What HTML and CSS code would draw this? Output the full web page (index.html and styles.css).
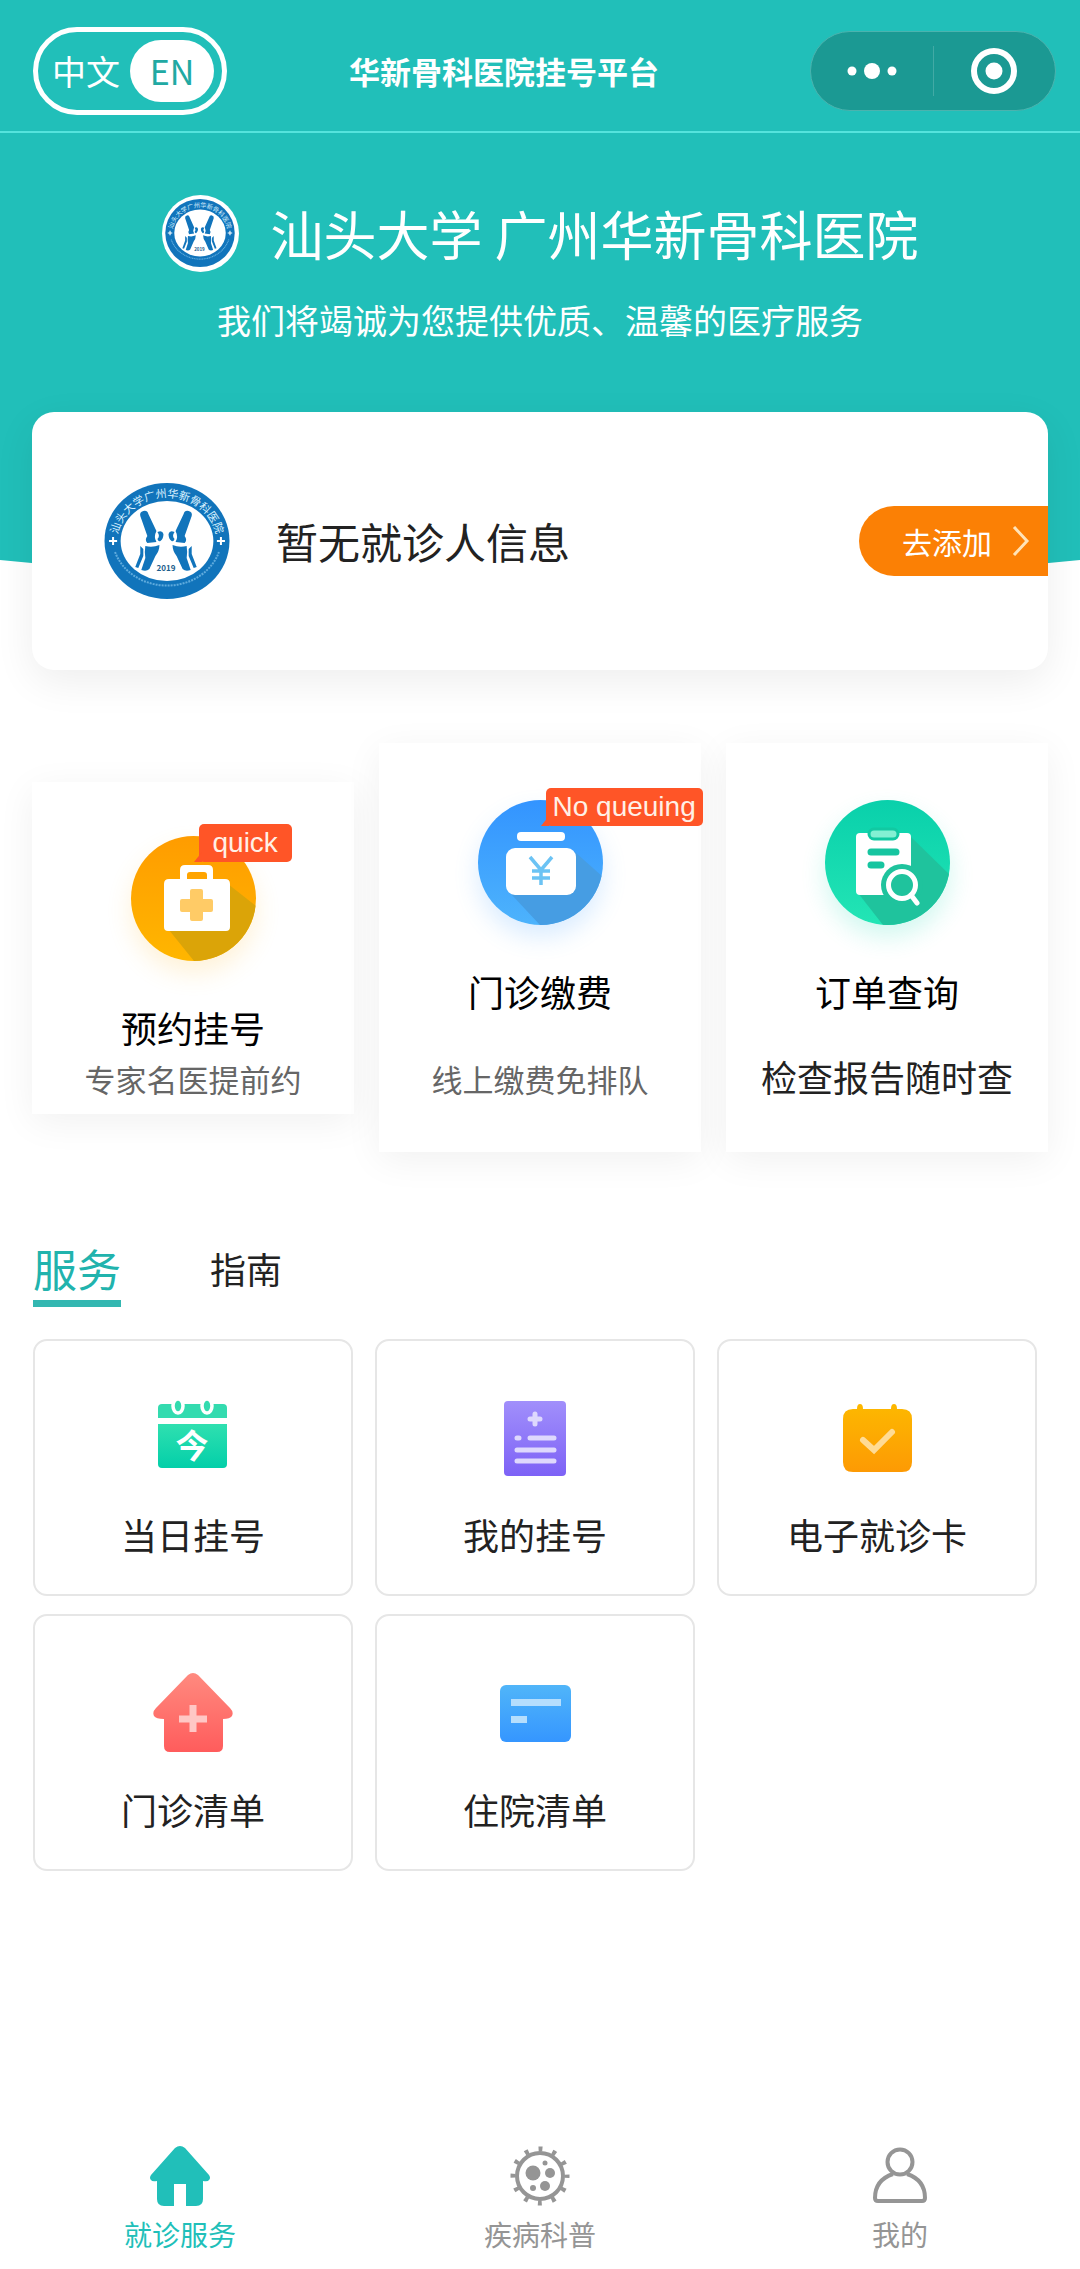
FILE: index.html
```html
<!DOCTYPE html>
<html lang="zh-CN">
<head>
  <meta charset="UTF-8" />
  <meta name="viewport" content="width=device-width, initial-scale=1" />
  <title>华新骨科医院挂号平台</title>
  <link rel="stylesheet" href="styles.css">
</head>
<body>
  <!-- shared hospital emblem -->
  <svg class="defs" width="0" height="0" aria-hidden="true">
    <defs>
      <path id="ring-top" d="M13 60 A49 45 0 0 1 112 60" />
      <g id="bone">
        <path d="M36 33q-1-4 3-5 4-1 5 3l8 17q-3 6 0 11l-9 1q-3-3 0-7z" />
        <path d="M53 49q5-2 6 2 0 5-3 7-2 1-3-2 3-3 0-7z" />
        <path d="M41 63q7 2 14-1 0 6-4 11l-6 13q-3 3-8 1l4-12q-1-6 0-12z" />
        <path d="M36 63l3 3v7l-5 12-3-1 5-13z" />
      </g>
      <symbol id="emblem" viewBox="0 0 125 116" preserveAspectRatio="none">
        <ellipse cx="62.5" cy="58" rx="62" ry="58" fill="#1174bb" />
        <ellipse cx="62.5" cy="58" rx="46" ry="40" fill="#fff" />
        <text font-size="11" fill="#d9f1ff"><textPath href="#ring-top" startOffset="50%" text-anchor="middle">汕头大学广州华新骨科医院</textPath></text>
        <path d="M11 69a54 48 0 0 0 103 0" fill="none" stroke="#5fabdd" stroke-width="2" stroke-dasharray="2 1" />
        <path d="M8 54h2v3h3v2h-3v3h-2v-3h-3v-2h3zM115 54h2v3h3v2h-3v3h-2v-3h-3v-2h3z" fill="#fff" />
        <use href="#bone" fill="#1174bb" />
        <use href="#bone" fill="#1174bb" transform="translate(123 0) scale(-1 1)" />
        <text x="61.5" y="88" font-size="8" font-weight="bold" fill="#1c5d8c" text-anchor="middle">2019</text>
      </symbol>
    </defs>
  </svg>

  <header class="topbar">
    <button class="lang"><span>中文</span><span class="lang-on">EN</span></button>
    <h1>华新骨科医院挂号平台</h1>
    <div class="capsule">
      <button aria-label="更多">
        <svg width="50" height="50" viewBox="0 0 50 50" fill="#fff"><circle cx="5" cy="25" r="4.5" /><circle cx="25" cy="25" r="8" /><circle cx="45" cy="25" r="4.5" /></svg>
      </button>
      <button aria-label="关闭">
        <svg width="50" height="50" viewBox="0 0 50 50"><circle cx="25" cy="25" r="20" fill="none" stroke="#fff" stroke-width="6" /><circle cx="25" cy="25" r="8.5" fill="#fff" /></svg>
      </button>
    </div>
  </header>

  <section class="hero">
    <div class="hero-name">
      <span class="hero-logo"><svg width="70" height="68"><use href="#emblem" /></svg></span>
      <h2>汕头大学 广州华新骨科医院</h2>
    </div>
    <p>我们将竭诚为您提供优质、温馨的医疗服务</p>
  </section>

  <main>
    <section class="patient">
      <svg width="126" height="116"><use href="#emblem" /></svg>
      <p>暂无就诊人信息</p>
      <button class="add-btn">去添加
        <svg width="18" height="32" viewBox="0 0 18 32" fill="none" stroke="#ffe3b8" stroke-width="3"><path d="M2 2l13 14L2 30" /></svg>
      </button>
    </section>

    <section class="features">
      <a class="feature" href="#">
        <span class="feature-icon orange">
          <svg width="125" height="125" viewBox="0 0 125 125">
            <defs>
              <linearGradient id="g-orange" x1="0" y1="0" x2="0" y2="1"><stop offset="0" stop-color="#ff9c00" /><stop offset="1" stop-color="#ffb600" /></linearGradient>
              <clipPath id="disc"><circle cx="62.5" cy="62.5" r="62.5" /></clipPath>
            </defs>
            <circle cx="62.5" cy="62.5" r="62.5" fill="url(#g-orange)" />
            <path clip-path="url(#disc)" d="M97 48l28 22v55H63L38 94z" fill="#dba408" />
            <path fill="#fff" fill-rule="evenodd" d="M49 43V34q0-5 5-5h23q5 0 5 5v9h12q5 0 5 5v43q0 4-4 4H37q-4 0-4-4V48q0-5 5-5zM56 43h20v-4q0-3-3-3H59q-3 0-3 3z" />
            <path fill="#ffcb66" d="M61 53h9q2 0 2 2v8h8q2 0 2 2v9q0 2-2 2h-8v7q0 2-2 2h-9q-2 0-2-2v-7h-8q-2 0-2-2v-9q0-2 2-2h8v-8q0-2 2-2z" />
          </svg>
          <span class="badge">quick</span>
        </span>
        <h3>预约挂号</h3>
        <p>专家名医提前约</p>
      </a>
      <a class="feature tall" href="#">
        <span class="feature-icon blue">
          <svg width="125" height="125" viewBox="0 0 125 125">
            <defs><linearGradient id="g-blue" x1="0" y1="0" x2="0" y2="1"><stop offset="0" stop-color="#3394ff" /><stop offset="1" stop-color="#4db3fc" /></linearGradient></defs>
            <circle cx="62.5" cy="62.5" r="62.5" fill="url(#g-blue)" />
            <path clip-path="url(#disc)" d="M97 52l28 25v48H62L33 94z" fill="#469de3" />
            <rect x="39" y="32" width="48" height="9" rx="4" fill="#fff" />
            <rect x="28" y="48" width="70" height="47" rx="9" fill="#fff" />
            <path d="M52 57l11 13 11-13M63 70v15M54 71h18M54 78h18" fill="none" stroke="#6cc3f4" stroke-width="3.5" />
          </svg>
          <span class="badge">No queuing</span>
        </span>
        <h3>门诊缴费</h3>
        <p>线上缴费免排队</p>
      </a>
      <a class="feature tall" href="#">
        <span class="feature-icon green">
          <svg width="125" height="125" viewBox="0 0 125 125">
            <defs><linearGradient id="g-green" x1="0" y1="0" x2="0" y2="1"><stop offset="0" stop-color="#09d0ab" /><stop offset="1" stop-color="#23e5b5" /></linearGradient></defs>
            <circle cx="62.5" cy="62.5" r="62.5" fill="url(#g-green)" />
            <path clip-path="url(#disc)" d="M85 36l40 39v50H58L33 93z" fill="#1fc39d" />
            <path d="M35 33h47q4 0 4 4v58H35q-4 0-4-4V37q0-4 4-4z" fill="#fff" />
            <rect x="44" y="29" width="29" height="10" rx="5" fill="#84f0d3" stroke="#11c9a2" stroke-width="3" />
            <path d="M46 52h25M46 65h10" stroke="#16c5a0" stroke-width="7" stroke-linecap="round" />
            <circle cx="77" cy="85" r="21" fill="#1fc39d" />
            <circle cx="77" cy="85" r="13.5" fill="none" stroke="#fff" stroke-width="5" />
            <path d="M86 95l6 8" stroke="#fff" stroke-width="5" stroke-linecap="round" />
          </svg>
        </span>
        <h3>订单查询</h3>
        <p class="dark">检查报告随时查</p>
      </a>
    </section>

    <nav class="tabs">
      <button class="active">服务</button>
      <button>指南</button>
    </nav>

    <section class="grid">
      <a class="tile" href="#">
        <span class="tile-icon">
          <svg width="70" height="76" viewBox="0 0 70 76">
            <defs><linearGradient id="g-cal" x1="0" y1="0" x2="0" y2="1"><stop offset="0" stop-color="#2fe0b0" /><stop offset="1" stop-color="#03cfa9" /></linearGradient></defs>
            <path d="M4 4h61q4 0 4 4v10H0V8q0-4 4-4z" fill="#33dbaf" />
            <path d="M0 24h69v40q0 4-4 4H4q-4 0-4-4z" fill="url(#g-cal)" />
            <ellipse cx="20" cy="6" rx="5" ry="7" fill="#33dbaf" stroke="#fff" stroke-width="3.5" />
            <ellipse cx="49" cy="6" rx="5" ry="7" fill="#33dbaf" stroke="#fff" stroke-width="3.5" />
            <text x="34" y="58" font-size="33" font-weight="bold" fill="#fff" text-anchor="middle">今</text>
          </svg>
        </span>
        当日挂号
      </a>
      <a class="tile" href="#">
        <span class="tile-icon">
          <svg width="62" height="75" viewBox="0 0 62 75">
            <defs><linearGradient id="g-purple" x1="0" y1="0" x2="0" y2="1"><stop offset="0" stop-color="#a18ffb" /><stop offset="1" stop-color="#7d62f6" /></linearGradient></defs>
            <rect width="62" height="75" rx="4" fill="url(#g-purple)" />
            <path d="M31 13v10M26 18h10M13 37h2M26 37h24M13 49h37M13 60h37" stroke="#ded8fd" stroke-width="5" stroke-linecap="round" />
          </svg>
        </span>
        我的挂号
      </a>
      <a class="tile" href="#">
        <span class="tile-icon">
          <svg width="69" height="68" viewBox="0 0 69 68">
            <defs><linearGradient id="g-check" x1="0" y1="0" x2="0" y2="1"><stop offset="0" stop-color="#fdb800" /><stop offset="1" stop-color="#fd9a04" /></linearGradient></defs>
            <path d="M10 5h4q0-5 3-5t3 5h28q0-5 3-5t3 5h5q10 0 10 10v43q0 10-10 10H10q-10 0-10-10V15q0-10 10-10z" fill="url(#g-check)" />
            <path d="M20 36l11 10 18-18" fill="none" stroke="#ffdb94" stroke-width="6" stroke-linecap="round" />
          </svg>
        </span>
        电子就诊卡
      </a>
      <a class="tile" href="#">
        <span class="tile-icon">
          <svg width="80" height="80" viewBox="0 0 80 80">
            <defs><linearGradient id="g-red" x1="0" y1="0" x2="0" y2="1"><stop offset="0" stop-color="#ff8a7f" /><stop offset="1" stop-color="#ff5c5c" /></linearGradient></defs>
            <path d="M35 2q5-4 10 0l32 33q4 4 2 8-2 3-9 3v27q0 6-6 6H17q-6 0-6-6V46q-8 0-10-3-2-4 2-8z" fill="url(#g-red)" />
            <path d="M40 32v27M26 46h28" stroke="#ffc7c5" stroke-width="7" />
          </svg>
        </span>
        门诊清单
      </a>
      <a class="tile" href="#">
        <span class="tile-icon">
          <svg width="71" height="57" viewBox="0 0 71 57">
            <defs><linearGradient id="g-bill" x1="0" y1="0" x2="0" y2="1"><stop offset="0" stop-color="#50b5f9" /><stop offset="1" stop-color="#3596ff" /></linearGradient></defs>
            <rect width="71" height="57" rx="6" fill="url(#g-bill)" />
            <path d="M11 14h50v7H11zM11 31h16v7H11z" fill="#b5defd" />
          </svg>
        </span>
        住院清单
      </a>
    </section>
  </main>

  <nav class="tabbar">
    <a class="active" href="#">
      <svg width="60" height="60" viewBox="0 0 60 60"><path fill="currentColor" d="M25 2q5-4 10 0l24 27q2 3 0 5-1 2-6 1v18q0 7-7 7H36V38H24v22H14q-7 0-7-7V35q-5 1-6-1-2-2 0-5z" /></svg>
      就诊服务
    </a>
    <a href="#">
      <svg width="60" height="60" viewBox="0 0 60 60">
        <circle cx="30" cy="30" r="23" fill="none" stroke="currentColor" stroke-width="4" />
        <circle cx="30" cy="30" r="27" fill="none" stroke="currentColor" stroke-width="5" stroke-dasharray="4 10.14" stroke-dashoffset="2" />
        <g fill="currentColor"><circle cx="23" cy="27" r="7.5" /><circle cx="40" cy="27" r="5" /><circle cx="35" cy="17" r="2.5" /><circle cx="35" cy="40" r="5" /><circle cx="23" cy="42" r="3" /></g>
      </svg>
      疾病科普
    </a>
    <a href="#">
      <svg width="60" height="60" viewBox="0 0 60 60" fill="none" stroke="currentColor" stroke-width="4"><circle cx="30" cy="16" r="12.5" /><path d="M23 28Q5 34 5 52q0 3 3 3h44q3 0 3-3 0-18-18-24" /></svg>
      我的
    </a>
  </nav>
</body>
</html>
```
FILE: styles.css
```css
* {
  box-sizing: border-box;
}
body {
  display: flex;
  flex-direction: column;
  min-height: 100vh;
  margin: 0;
  background: #fff;
  color: #222;
  font-family: "Noto Sans CJK SC", sans-serif;
}
h1, h2, h3, p {
  margin: 0;
  font-weight: inherit;
}
a {
  color: inherit;
  text-decoration: none;
}
button {
  padding: 0;
  border: none;
  background: none;
  color: inherit;
  font: inherit;
  cursor: pointer;
}
svg {
  display: block;
  flex: none;
}
.defs {
  position: absolute;
}

/* top bar */
.topbar {
  display: flex;
  align-items: center;
  height: 133px;
  padding: 10px 24px 0 33px;
  border-bottom: 2px solid #55e3dd;
  background: #21bfb9;
  color: #fff;
}
.lang {
  display: flex;
  align-items: center;
  justify-content: space-between;
  width: 194px;
  height: 88px;
  padding: 0 8px 0 14px;
  border: 5px solid #fff;
  border-radius: 44px;
  font-size: 34px;
}
.lang-on {
  width: 84px;
  border-radius: 31px;
  background: #fff;
  color: #21a9a3;
  line-height: 62px;
}
.topbar h1 {
  flex: 1;
  padding-left: 122px;
  font-size: 31px;
  font-weight: bold;
  line-height: 44px;
}
.capsule {
  display: flex;
  align-items: center;
  width: 246px;
  height: 80px;
  border: 1px solid #4bb3ae;
  border-radius: 40px;
  background: #1b9993;
}
.capsule button {
  display: flex;
  flex: 1;
  justify-content: center;
}
.capsule button + button {
  border-left: 1px solid #42aaa5;
}

/* hero */
.hero {
  height: 453px;
  padding-top: 60px;
  background: #21bfb9;
  clip-path: ellipse(150% 100% at 50% 0);
  color: #fff;
  text-align: center;
}
.hero-name {
  display: flex;
  align-items: center;
  justify-content: center;
  gap: 32px;
}
.hero-logo {
  display: flex;
  align-items: center;
  justify-content: center;
  width: 77px;
  height: 77px;
  border-radius: 50%;
  background: #fff;
}
.hero h2 {
  font-size: 53px;
  line-height: 80px;
}
.hero p {
  margin-top: 22px;
  font-size: 34px;
  line-height: 50px;
}

/* patient card */
.patient {
  position: relative;
  display: flex;
  align-items: center;
  height: 258px;
  margin: -174px 32px 0;
  padding-left: 72px;
  border-radius: 22px;
  background: #fff;
  box-shadow: 0 12px 40px rgba(0, 0, 0, 0.07);
}
.patient p {
  flex: 1;
  padding-left: 46px;
  font-size: 42px;
  line-height: 60px;
}
.add-btn {
  display: flex;
  align-items: center;
  justify-content: space-between;
  width: 189px;
  height: 70px;
  padding: 0 18px 0 43px;
  border-radius: 35px 0 0 35px;
  background: #fb8005;
  color: #fff;
  font-size: 30px;
}

/* feature cards */
.features {
  display: grid;
  grid-template-columns: repeat(3, 1fr);
  align-items: center;
  gap: 25px;
  margin: 73px 32px 0;
}
.feature {
  display: flex;
  flex-direction: column;
  align-items: center;
  padding: 54px 0 10px;
  background: #fff;
  box-shadow: 0 8px 36px rgba(0, 0, 0, 0.06);
  text-align: center;
}
.feature-icon {
  position: relative;
  border-radius: 50%;
}
.orange {
  box-shadow: 0 12px 24px rgba(255, 190, 60, 0.2);
}
.blue {
  box-shadow: 0 12px 24px rgba(70, 160, 255, 0.2);
}
.green {
  box-shadow: 0 12px 24px rgba(30, 220, 180, 0.2);
}
.badge {
  position: absolute;
  top: -12px;
  left: 68px;
  padding: 0 7px;
  border-radius: 5px;
  background: #ff5527;
  color: #fff0e6;
  font-family: "Liberation Sans", sans-serif;
  font-size: 28px;
  line-height: 38px;
  white-space: nowrap;
}
.orange .badge {
  padding: 0 14px;
}
.badge::before {
  content: "";
  position: absolute;
  left: -5px;
  bottom: 0;
  border-bottom: 10px solid #ff5527;
  border-left: 8px solid transparent;
}
.feature h3 {
  margin-top: 41px;
  color: #000;
  font-size: 36px;
  line-height: 50px;
}
.feature p {
  margin-top: 2px;
  color: #666;
  font-size: 31px;
  line-height: 50px;
}
.tall {
  padding: 57px 0 48px;
}
.tall p {
  margin-top: 38px;
}
.feature .dark {
  padding-bottom: 6px;
  color: #222;
  font-size: 36px;
  line-height: 44px;
}

/* tabs */
.tabs {
  display: flex;
  gap: 89px;
  margin: 85px 33px 0;
}
.tabs button {
  height: 70px;
  border-bottom: 7px solid transparent;
  font-size: 36px;
  line-height: 63px;
}
.tabs .active {
  border-color: #33b7b1;
  color: #21b3ad;
  font-size: 44px;
}

/* service tiles */
.grid {
  display: grid;
  grid-template-columns: repeat(3, 1fr);
  gap: 18px 22px;
  margin: 32px 43px 0 33px;
}
.tile {
  display: flex;
  flex-direction: column;
  align-items: center;
  gap: 31px;
  padding: 57px 0 35px;
  border: 2px solid #e6e6e6;
  border-radius: 14px;
  font-size: 36px;
  line-height: 50px;
}
.tile-icon {
  display: flex;
  align-items: center;
  height: 80px;
}

/* bottom bar */
.tabbar {
  display: flex;
  margin-top: auto;
  padding: 20px 0 15px;
}
.tabbar a {
  display: flex;
  flex: 1;
  flex-direction: column;
  align-items: center;
  gap: 8px;
  color: #959595;
  font-size: 28px;
  line-height: 40px;
}
.tabbar .active {
  color: #21bfb9;
}
```
